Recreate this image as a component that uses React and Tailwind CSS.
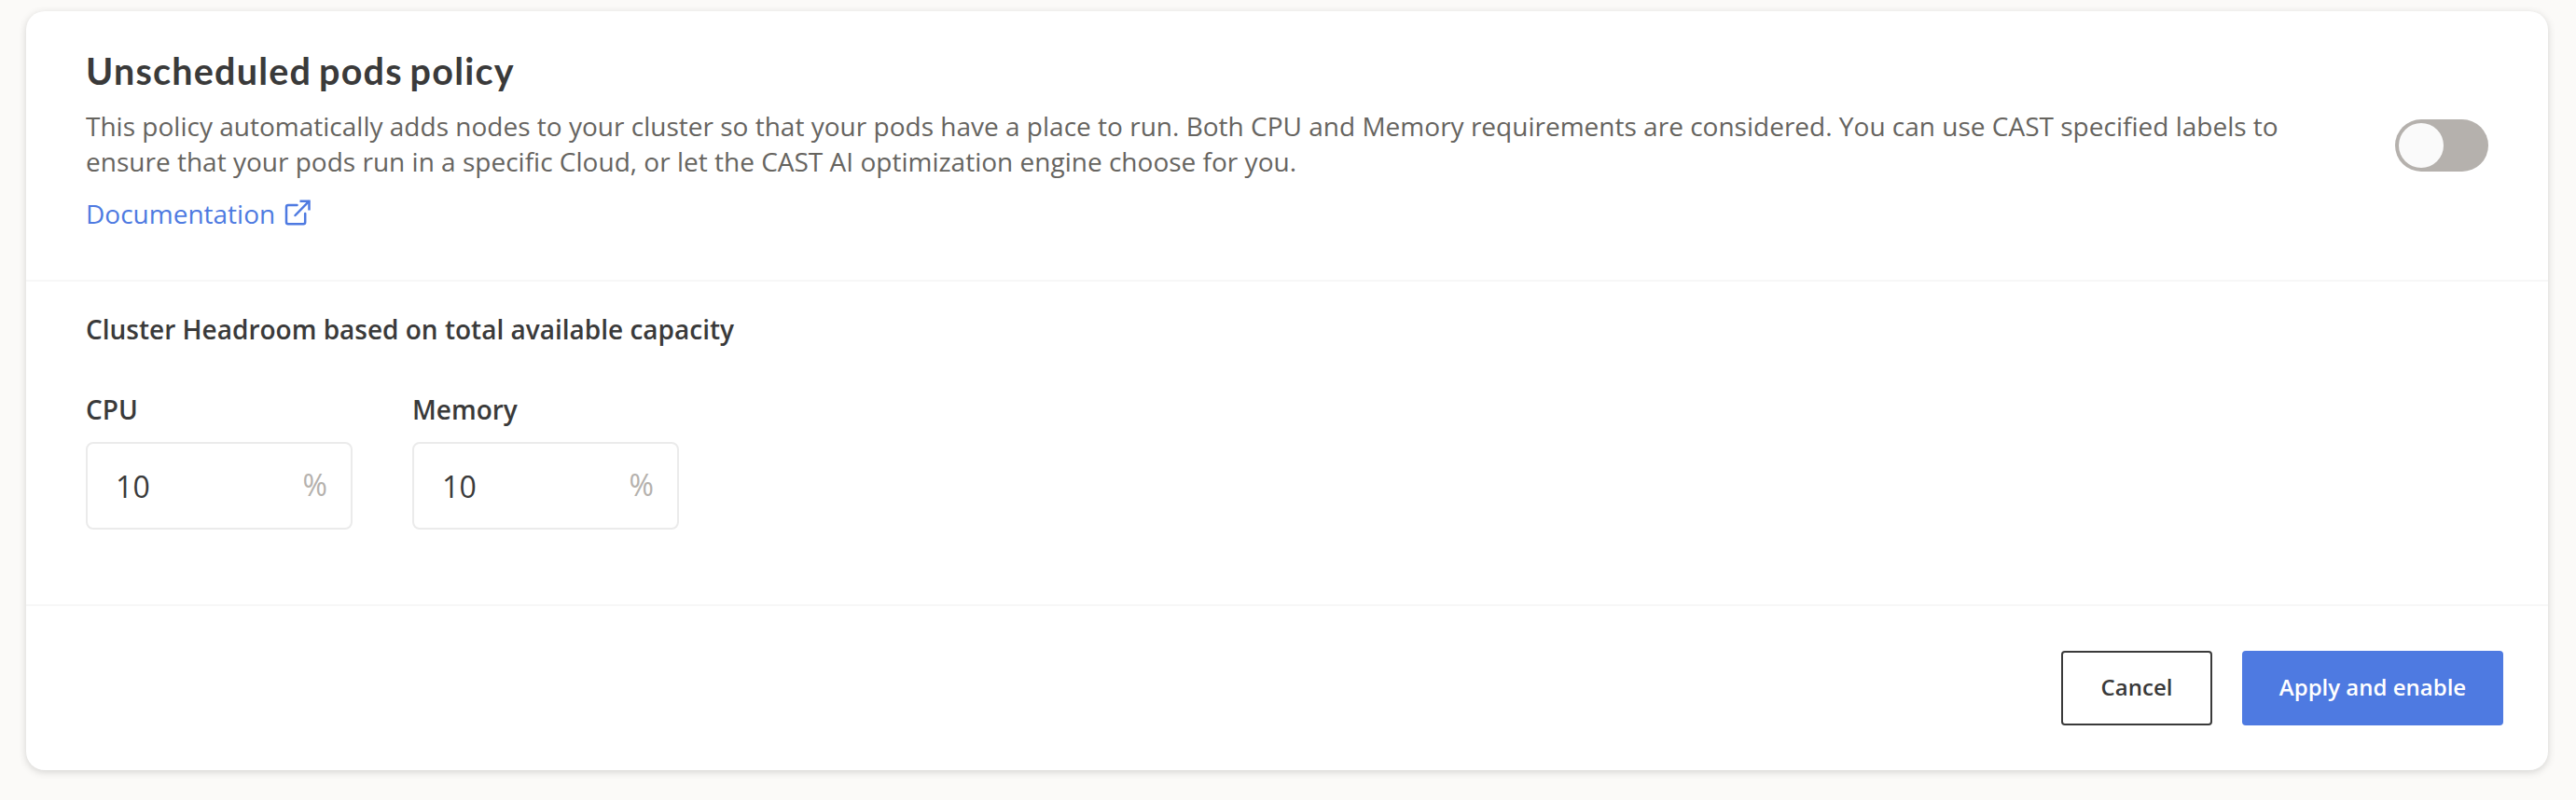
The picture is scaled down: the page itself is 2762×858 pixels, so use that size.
function ExternalLinkIcon() {
  return (
    <svg width="30" height="30" viewBox="0 0 30 30" fill="none" stroke="currentColor" strokeWidth="2.5" className="ml-[9px] shrink-0">
      <path d="M14.5 6H5a2 2 0 0 0-2 2V24.2a2 2 0 0 0 2 2H21.200a2 2 0 0 0 2-2V15" strokeLinecap="round" />
      <path d="M17.500 1.700H27.500V11.500" />
      <path d="M12.500 17L27 2.200" strokeLinecap="round" />
    </svg>
  );
}

function PercentField({ label, value }) {
  return (
    <label className="flex w-[286px] flex-col">
      <span className="text-[28px] leading-[38px] font-semibold">{label}</span>
      <span className="mt-4 flex h-[94px] items-center justify-between rounded-lg border-2 border-[#ebebeb] pr-[25px] pl-[30px]">
        <span className="pt-[2px] text-[32px] leading-[44px] tracking-[0.3px]">{value}</span>
        <span className="pb-[2px] text-[32px] leading-[44px] text-[#b5b1ad]">%</span>
      </span>
    </label>
  );
}

export default function App() {
  return (
    <div className="h-[858px] w-[2762px] bg-[#fbfaf8] pt-3 pl-7 font-['Open_Sans',sans-serif] text-[#3a3a3a]">
      <div className="flex h-[814px] w-[2704px] flex-col rounded-[20px] bg-white shadow-[0_2px_8px_rgba(0,0,0,0.16)]">
        <section className="flex h-[290px] items-center justify-between border-b-2 border-[#f7f7f7] pr-16 pl-16">
          <div className="h-full w-[2380px] pt-[38px]">
            <h1 className="font-['Lato',sans-serif] text-[39.500px] leading-[52px] font-bold tracking-[1.22px] [word-spacing:-3px]">Unscheduled pods policy</h1>
            <p className="mt-[14px] text-[28px] leading-[38px] tracking-[0.008px] text-[#66645f]">
              This policy automatically adds nodes to your cluster so that your pods have a place to run. Both CPU and Memory requirements are considered. You can use CAST specified labels to ensure that your pods run in a specific Cloud, or let the CAST AI optimization engine choose for you.
            </p>
            <a className="mt-[18px] flex items-center text-[28px] leading-[38px] text-[#4e7ae1]">
              Documentation
              <ExternalLinkIcon />
            </a>
          </div>
          <div className="flex h-14 w-[100px] items-center rounded-full bg-[#b5b1ad] pl-1">
            <div className="size-12 rounded-full bg-[#fafafa]" />
          </div>
        </section>
        <section className="h-[348px] border-b-2 border-[#f7f7f7] px-16 pt-8">
          <h2 className="text-[28px] leading-[38px] font-semibold">Cluster Headroom based on total available capacity</h2>
          <div className="mt-12 flex gap-16">
            <PercentField label="CPU" value="10" />
            <PercentField label="Memory" value="10" />
          </div>
        </section>
        <footer className="flex justify-end gap-8 pt-12 pr-12">
          <button className="h-20 w-[162px] rounded border-2 border-[#3a3a3a] pb-[2px] text-[24px] font-semibold">Cancel</button>
          <button className="h-20 w-[280px] rounded bg-[#4e7ae1] pb-[2px] text-[24px] font-semibold text-white">Apply and enable</button>
        </footer>
      </div>
    </div>
  );
}
